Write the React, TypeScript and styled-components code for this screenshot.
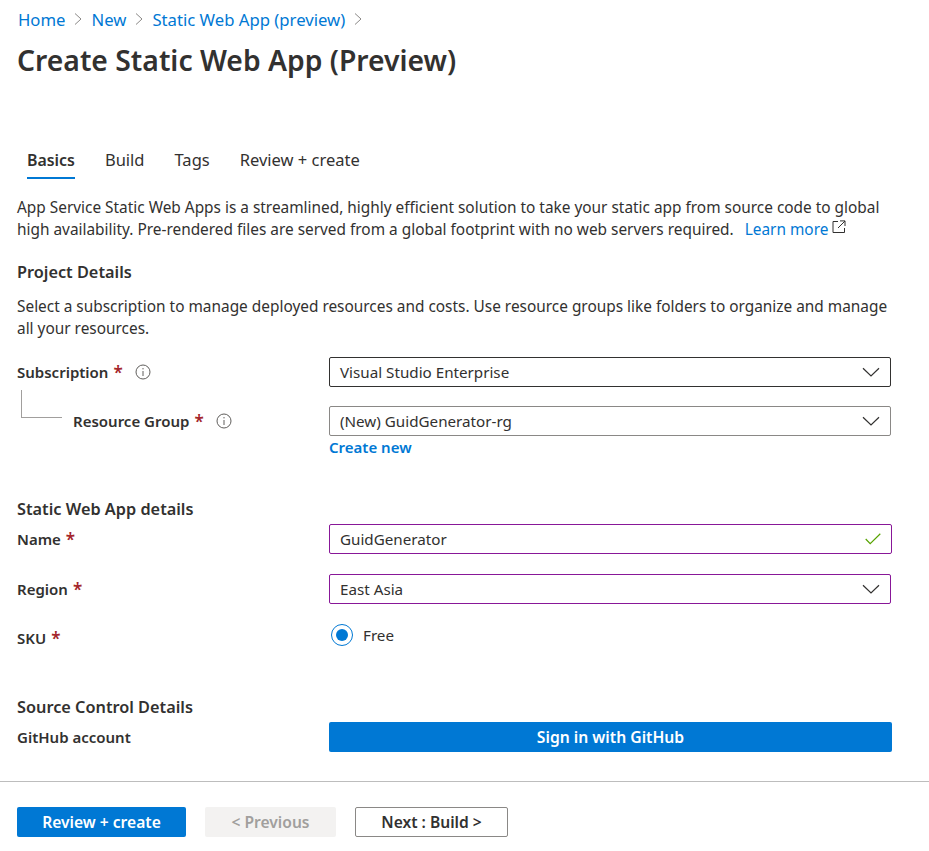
import React from 'react';
import styled, { createGlobalStyle } from 'styled-components';

const GlobalStyle = createGlobalStyle`
  html, body {
    margin: 0;
    padding: 0;
    background: #fff;
    overflow: hidden;
  }
  body {
    font-family: 'Noto Sans', 'Open Sans', sans-serif;
    color: #323130;
  }
`;

const Chevron = () => (
  <svg width="18" height="10" viewBox="0 0 18 10" fill="none" stroke="#323130" strokeWidth="1.2">
    <path d="M1 1.2 L9 9 L17 1.2" />
  </svg>
);

const Crumb = () => (
  <svg width="8" height="12" viewBox="0 0 8 12" fill="none" stroke="#8a8886" strokeWidth="1">
    <path d="M1 .5 L7 6 L1 11.5" />
  </svg>
);

const InfoIcon = () => (
  <svg width="16" height="16" viewBox="0 0 16 16" fill="none" stroke="#605e5c" strokeWidth="1">
    <circle cx="8" cy="8" r="7" />
    <path d="M8 7 V12 M8 4 V5.4" />
  </svg>
);

const ExternalIcon = () => (
  <svg width="14" height="14" viewBox="0 0 14 14" fill="none" stroke="#323130" strokeWidth="1">
    <path d="M6 1.5 H1 V12.5 H12.5 V8 M8 .9 H13 V6 M13 1 L6 8" />
  </svg>
);

const CheckIcon = () => (
  <svg width="16" height="12" viewBox="0 0 16 12" fill="none" stroke="#57a300" strokeWidth="1.2">
    <path d="M.7 6 L5.2 10.6 L15.3 .8" />
  </svg>
);

const App: React.FC = () => {
  return (
    <Page>
      <GlobalStyle />
      <Breadcrumb>
        <CrumbLink>Home</CrumbLink>
        <Crumb />
        <CrumbLink>New</CrumbLink>
        <Crumb />
        <CrumbLink>Static Web App (preview)</CrumbLink>
        <Crumb />
      </Breadcrumb>
      <Title>Create Static Web App (Preview)</Title>

      <Tabs>
        <Tab $active>Basics</Tab>
        <Tab>Build</Tab>
        <Tab>Tags</Tab>
        <Tab>Review + create</Tab>
      </Tabs>

      <Paragraph>
        App Service Static Web Apps is a streamlined, highly efficient solution to take your static app from source code to global
        <br />
        high availability. Pre-rendered files are served from a global footprint with no web servers required.
        <LearnMore>Learn more</LearnMore>
        <ExternalWrap>
          <ExternalIcon />
        </ExternalWrap>
      </Paragraph>

      <SectionHeading $top={21}>Project Details</SectionHeading>
      <Paragraph $top={13}>
        Select a subscription to manage deployed resources and costs. Use resource groups like folders to organize and manage
        <br />
        all your resources.
      </Paragraph>

      <Row $top={18}>
        <Label>
          <LabelText>Subscription</LabelText>
          <Star>*</Star>
          <InfoWrap>
            <InfoIcon />
          </InfoWrap>
        </Label>
        <Select $border="#323130">
          Visual Studio Enterprise
          <Chevron />
        </Select>
      </Row>

      <Row $top={19}>
        <Label>
          <Elbow />
          <LabelText>Resource Group</LabelText>
          <Star>*</Star>
          <InfoWrap>
            <InfoIcon />
          </InfoWrap>
        </Label>
        <Select $border="#8a8886">
          (New) GuidGenerator-rg
          <Chevron />
        </Select>
      </Row>
      <CreateNew>Create new</CreateNew>

      <SectionHeading $top={41}>Static Web App details</SectionHeading>
      <Row $top={4}>
        <Label>
          <LabelText>Name</LabelText>
          <Star>*</Star>
        </Label>
        <Select $border="#881798" $wide>
          GuidGenerator
          <CheckIcon />
        </Select>
      </Row>
      <Row $top={20}>
        <Label>
          <LabelText>Region</LabelText>
          <Star>*</Star>
        </Label>
        <Select $border="#881798">
          East Asia
          <Chevron />
        </Select>
      </Row>
      <Row $top={19}>
        <Label>
          <LabelText>SKU</LabelText>
          <Star>*</Star>
        </Label>
        <RadioRow>
          <Radio />
          Free
        </RadioRow>
      </Row>

      <SectionHeading $top={43}>Source Control Details</SectionHeading>
      <Row $top={4}>
        <Label>
          <LabelText>GitHub account</LabelText>
        </Label>
        <GithubButton>Sign in with GitHub</GithubButton>
      </Row>

      <Footer>
        <PrimaryButton>Review + create</PrimaryButton>
        <DisabledButton>&lt; Previous</DisabledButton>
        <OutlineButton>Next : Build &gt;</OutlineButton>
      </Footer>
    </Page>
  );
};

export default App;

// Styles
const Page = styled.div`
  width: 929px;
  height: 851px;
  padding-top: 8px;
  box-sizing: border-box;
  overflow: hidden;
`;

const Breadcrumb = styled.div`
  display: flex;
  align-items: center;
  gap: 9px;
  height: 22px;
  padding-left: 18px;
`;

const CrumbLink = styled.a`
  font-size: 16.7px;
  color: #0078d4;
`;

const Title = styled.h1`
  margin: 7px 0 0 17px;
  font-size: 28.3px;
  line-height: 46px;
  font-weight: 600;
`;

const Tabs = styled.div`
  display: flex;
  gap: 30px;
  margin: 59px 0 0 27px;
`;

const Tab = styled.div<{ $active?: boolean }>`
  height: 37px;
  line-height: 36px;
  box-sizing: border-box;
  font-size: ${(p) => (p.$active ? 15.9 : 16.5)}px;
  font-weight: ${(p) => (p.$active ? 600 : 400)};
  border-bottom: 2px solid ${(p) => (p.$active ? '#0078d4' : 'transparent')};
`;

const Paragraph = styled.p<{ $top?: number }>`
  margin: ${(p) => p.$top ?? 18}px 0 0 17px;
  font-size: 15.4px;
  line-height: 21.5px;
  white-space: nowrap;
`;

const LearnMore = styled.a`
  color: #0078d4;
  margin-left: 11px;
`;

const ExternalWrap = styled.span`
  display: inline-block;
  margin-left: 4px;
  vertical-align: 1px;
  svg {
    display: block;
  }
`;

const SectionHeading = styled.h2<{ $top: number }>`
  margin: ${(p) => p.$top}px 0 0 17px;
  font-size: 16.3px;
  line-height: 22px;
  font-weight: 600;
`;

const Row = styled.div<{ $top: number }>`
  display: flex;
  align-items: flex-start;
  margin-top: ${(p) => p.$top}px;
  padding-left: 17px;
`;

const Label = styled.div`
  display: flex;
  align-items: center;
  width: 312px;
  height: 30px;
  flex-shrink: 0;
  font-weight: 600;
  font-size: 15px;
`;

const LabelText = styled.span``;

const Elbow = styled.span`
  width: 41px;
  height: 28px;
  margin: -34px 11px 0 4px;
  box-sizing: border-box;
  border-left: 1px solid #a19f9d;
  border-bottom: 1px solid #a19f9d;
`;

const Star = styled.span`
  color: #a4262c;
  margin-left: 5px;
  font-size: 17px;
`;

const InfoWrap = styled.span`
  display: flex;
  margin-left: 12px;
`;

const Select = styled.div<{ $border: string; $wide?: boolean }>`
  display: flex;
  align-items: center;
  justify-content: space-between;
  box-sizing: border-box;
  width: ${(p) => (p.$wide ? 563 : 562)}px;
  height: 30px;
  padding: 0 10px;
  border: 1px solid ${(p) => p.$border};
  border-radius: 2px;
  font-size: 15.2px;
`;

const CreateNew = styled.a`
  display: block;
  margin: 1px 0 0 329px;
  line-height: 20px;
  font-size: 15px;
  font-weight: 600;
  color: #0078d4;
`;

const RadioRow = styled.div`
  display: flex;
  align-items: center;
  gap: 10px;
  height: 24px;
  margin-left: 2px;
  font-size: 15.2px;
`;

const Radio = styled.span`
  position: relative;
  width: 22px;
  height: 22px;
  box-sizing: border-box;
  border: 1px solid #0078d4;
  border-radius: 50%;

  &::after {
    content: '';
    position: absolute;
    inset: 4px;
    border-radius: 50%;
    background: #0078d4;
  }
`;

const GithubButton = styled.div`
  width: 563px;
  height: 30px;
  line-height: 30px;
  text-align: center;
  border-radius: 2px;
  background: #0078d4;
  color: #fff;
  font-size: 15.7px;
  font-weight: 600;
`;

const Footer = styled.div`
  display: flex;
  gap: 19px;
  margin-top: 29px;
  padding: 25px 0 0 17px;
  border-top: 1px solid #bdbdbd;
`;

const FooterButton = styled.div`
  height: 30px;
  line-height: 30px;
  box-sizing: border-box;
  text-align: center;
  border-radius: 2px;
  font-size: 15.6px;
  font-weight: 600;
`;

const PrimaryButton = styled(FooterButton)`
  width: 169px;
  background: #0078d4;
  color: #fff;
`;

const DisabledButton = styled(FooterButton)`
  width: 131px;
  background: #f3f2f1;
  color: #a19f9d;
`;

const OutlineButton = styled(FooterButton)`
  width: 153px;
  line-height: 28px;
  border: 1px solid #8a8886;
`;
